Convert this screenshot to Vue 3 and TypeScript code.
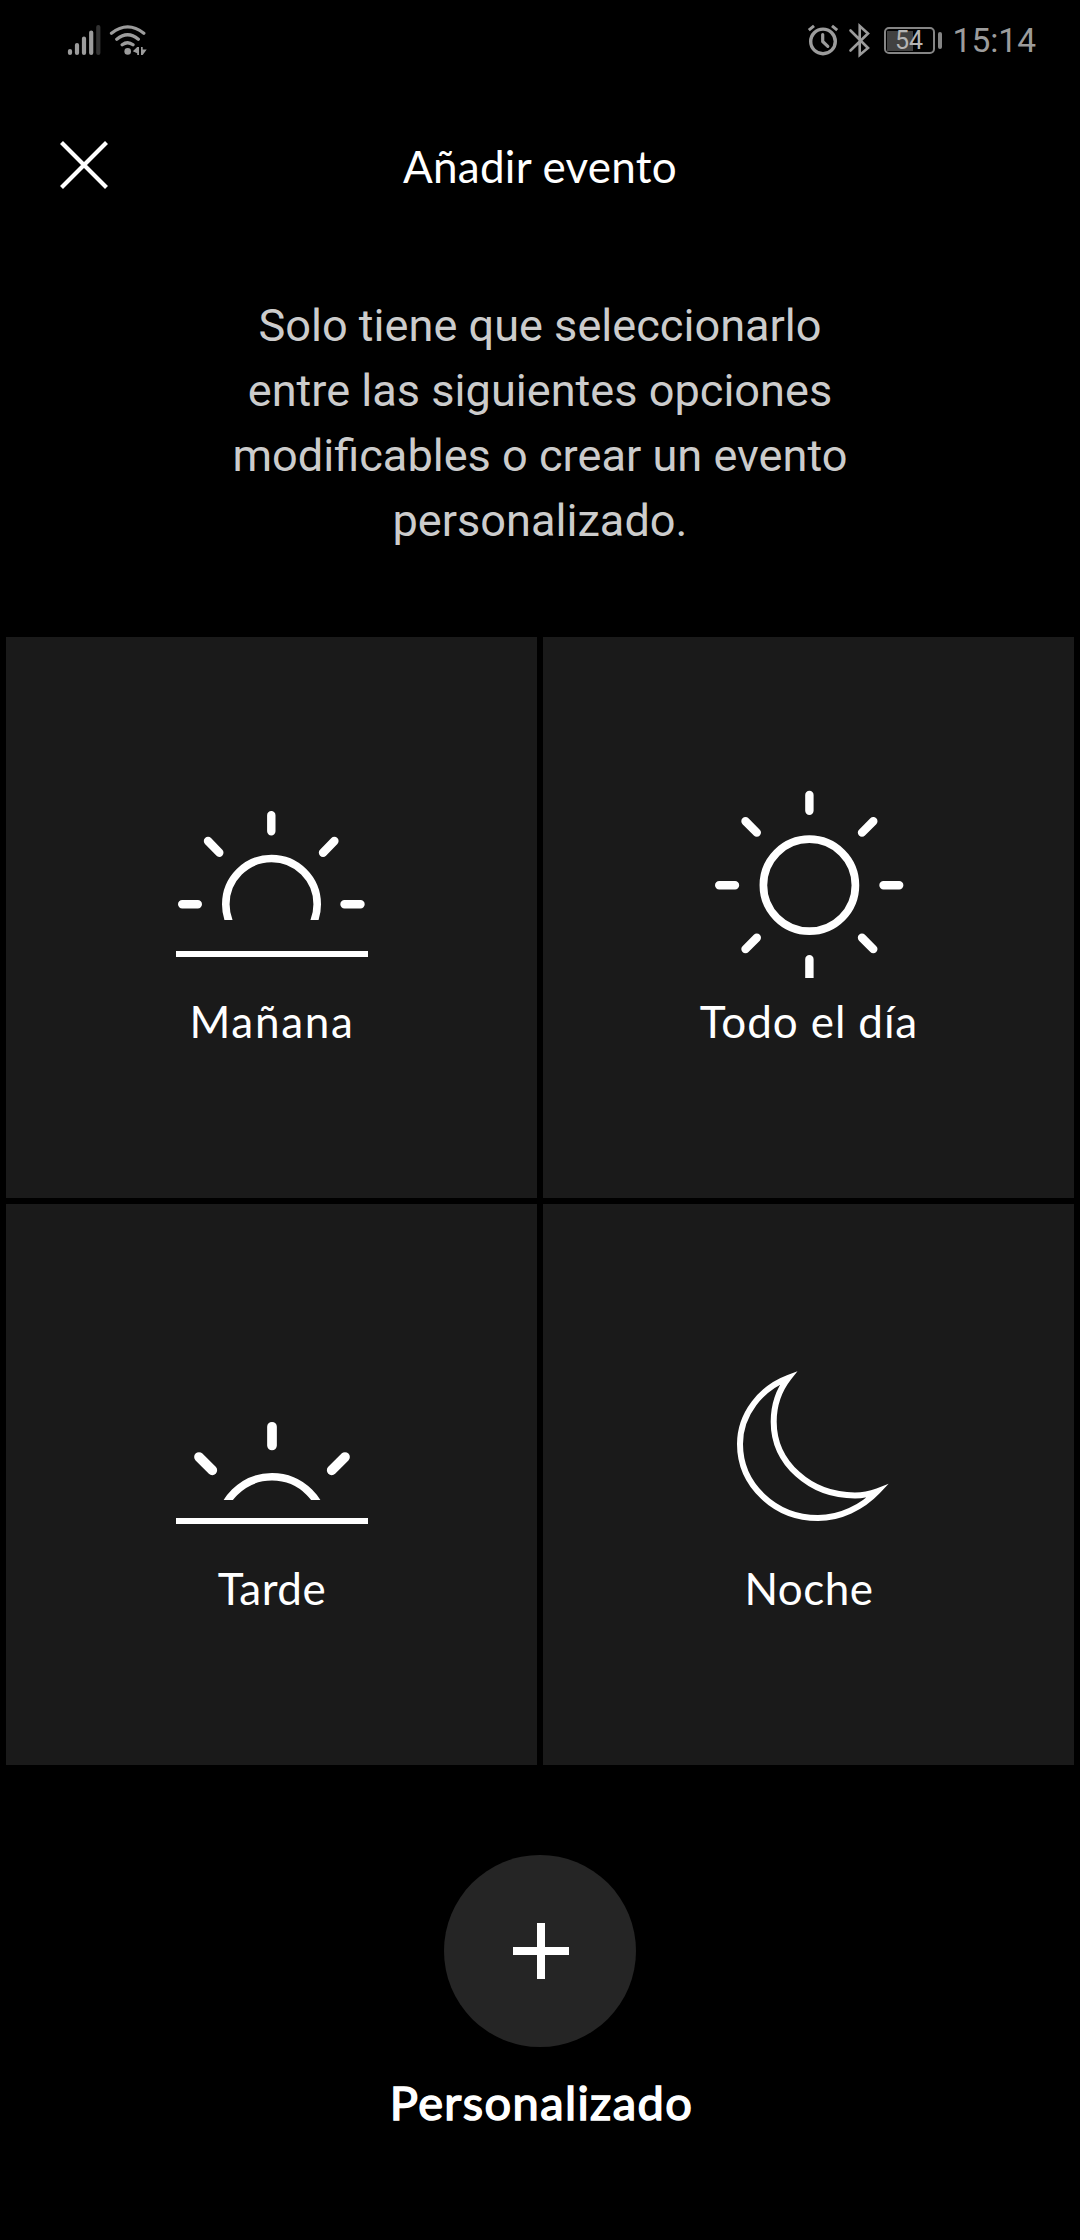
<script setup lang="ts">
interface EventOption {
  id: 'morning' | 'day' | 'evening' | 'night'
  label: string
}

const options: EventOption[] = [
  { id: 'morning', label: 'Mañana' },
  { id: 'day', label: 'Todo el día' },
  { id: 'evening', label: 'Tarde' },
  { id: 'night', label: 'Noche' },
]
const intro = [
  'Solo tiene que seleccionarlo',
  'entre las siguientes opciones',
  'modificables o crear un evento',
  'personalizado.',
]
</script>

<template>
  <main class="screen">
    <div class="status">
      <svg class="signal" viewBox="0 0 82 36" width="82" height="36">
        <g stroke="#9c9c9c" stroke-width="4.2" stroke-linecap="round" fill="none">
          <path d="M4 30.9V29M11 30.9V23M18 30.9V16.5M25.2 30.9V10.5" />
          <path d="M32.3 30.9V5" stroke="#323232" />
          <path d="M45.5 11.2Q61.7-1.5 77.800 11.2M50.8 17.2Q61.7 8.2 72.3 17.2M56.2 22.8Q61.7 18.6 67 22.8" stroke-width="3.3" />
        </g>
        <circle cx="61.7" cy="29.4" r="3.3" fill="#9c9c9c" />
        <path d="M73 25V33H71.200V31.200L66.800 29.300L71.200 25ZM75 25H76.700V27.500H80.700L76.700 33H75Z" fill="#9c9c9c" />
      </svg>
      <div class="status-right">
        <svg class="alarm" viewBox="0 0 32 36" width="32" height="36">
          <g fill="none" stroke="#9c9c9c">
            <circle cx="16" cy="19.4" r="12.3" stroke-width="3.4" />
            <path d="M15.7 12.5V19.5L20.8 24.3" stroke-width="3.2" stroke-linecap="round" stroke-linejoin="round" />
            <path d="M1.8 8.2L7 3.9M30.2 8.2L25 3.9" stroke-width="3" />
          </g>
        </svg>
        <svg class="bluetooth" viewBox="0 0 22 36" width="22" height="36">
          <path d="M2.5 8.5L20 26L11.7 33V4L20 11.5L2.5 28.5" fill="none" stroke="#9c9c9c" stroke-width="2.6" stroke-linecap="round" />
        </svg>
        <div class="battery"><span class="level"></span><span class="percent">54</span></div>
        <span class="battery-tip"></span>
        <span class="clock">15:14</span>
      </div>
    </div>

    <header class="header">
      <svg class="close" viewBox="0 0 48 48" width="48" height="48">
        <path d="M1.5 1.5L46.5 46.5M46.5 1.5L1.5 46.5" stroke="#fff" stroke-width="4.2" />
      </svg>
      <h1 class="title">Añadir evento</h1>
    </header>

    <p class="intro"><span v-for="line in intro" :key="line">{{ line }}</span></p>

    <section class="grid">
      <button v-for="option in options" :key="option.id" class="tile" type="button">
        <svg v-if="option.id === 'morning'" class="icon" viewBox="0 0 192 192" width="192" height="192">
          <clipPath id="sunrise-horizon"><rect width="192" height="134" /></clipPath>
          <g fill="none" stroke="#fff">
            <circle cx="95.5" cy="118.2" r="45.7" stroke-width="7.6" clip-path="url(#sunrise-horizon)" />
            <path d="M95.3 29.2V45.2M6.2 118.3H21.8M168.5 118.3H184.5M32 55L43.3 66.7M158.4 55L147 66.7" stroke-width="8.4" stroke-linecap="round" />
            <path d="M0 168H192" stroke-width="6" />
          </g>
        </svg>
        <svg v-else-if="option.id === 'day'" class="icon" viewBox="0 0 192 192" width="192" height="192">
          <g fill="none" stroke="#fff">
            <circle cx="96.4" cy="99.2" r="46" stroke-width="7.7" />
            <path d="M96.4 9V24.7M6.2 99.2H22M170.5 99.2H186.2M32.5 35.3L43.8 46.6M160.3 35.3L149 46.6M32.5 163.1L43.8 151.8M160.3 163.1L149 151.8M96.4 173.3V196" stroke-width="8.4" stroke-linecap="round" />
          </g>
        </svg>
        <svg v-else-if="option.id === 'evening'" class="icon" viewBox="0 0 192 192" width="192" height="192">
          <clipPath id="sunset-horizon"><rect width="192" height="147" /></clipPath>
          <g fill="none" stroke="#fff">
            <circle cx="96" cy="176.6" r="52.8" stroke-width="7.6" clip-path="url(#sunset-horizon)" />
            <path d="M96 73.8V92.500M23 104L36.300 117.300M169 104L155.700 117.300" stroke-width="9.7" stroke-linecap="round" />
            <path d="M0 168H192" stroke-width="6" />
          </g>
        </svg>
        <svg v-else class="icon" viewBox="0 0 192 192" width="192" height="192">
          <path d="M75.6 24.7C48 35 27 61 27 91C27 132 62 165 105 165C127 165 149 154.500 164.500 138.200C157 141 149.500 142.500 142 142.500C97 142.500 60.700 110 60.700 68.700C60.700 52 66 37 75.600 24.700Z" fill="none" stroke="#fff" stroke-width="6" stroke-miterlimit="10" />
        </svg>
        <span class="label" :class="option.id">{{ option.label }}</span>
      </button>
    </section>

    <section class="custom">
      <button class="add" type="button">
        <svg viewBox="0 0 56 56" width="56" height="56">
          <path d="M28 0V56M0 28H56" stroke="#fff" stroke-width="8" />
        </svg>
      </button>
      <span class="custom-label">Personalizado</span>
    </section>
  </main>
</template>

<style>
body {
  margin: 0;
  background: #000;
}
</style>

<style scoped>
.screen {
  box-sizing: border-box;
  width: 1080px;
  height: 2240px;
  overflow: hidden;
  background: #000;
  color: #fff;
  font-family: Lato, "Open Sans", sans-serif;
}
.screen * {
  box-sizing: border-box;
}
button {
  margin: 0;
  padding: 0;
  border: 0;
  color: inherit;
  font: inherit;
}
svg {
  display: block;
  flex: none;
}
.status {
  display: flex;
  justify-content: space-between;
  height: 80px;
  padding: 22px 44px 0 66px;
}
.status-right {
  display: flex;
  height: 36px;
  color: #9c9c9c;
  font-family: Roboto, sans-serif;
}
.bluetooth {
  margin-left: 9px;
}
.battery {
  position: relative;
  width: 51px;
  height: 27px;
  margin: 5px 0 0 14px;
  border: 2px solid #858585;
  border-radius: 5px;
}
.level {
  display: block;
  width: 26px;
  height: 20px;
  margin: 1.5px;
  background: #414141;
}
.percent {
  position: absolute;
  inset: 0;
  color: #b4b4b4;
  font-size: 25px;
  line-height: 24px;
  text-align: center;
}
.battery-tip {
  width: 4px;
  height: 17px;
  margin: 10px 0 0 3px;
  border-radius: 2px;
  background: #858585;
}
.clock {
  margin-left: 11px;
  font-size: 33.5px;
  line-height: 38px;
}
.header {
  display: grid;
  grid-template-columns: 108px 1fr 108px;
  height: 180px;
  padding-top: 61px;
}
.close {
  justify-self: end;
}
.title {
  margin: 0;
  font-size: 44px;
  font-weight: 400;
  line-height: 51px;
  letter-spacing: 0.25px;
  text-align: center;
}
.intro {
  display: flex;
  flex-direction: column;
  height: 377px;
  margin: 0;
  padding-top: 33px;
  color: #ccc;
  font-family: Roboto, sans-serif;
  font-size: 45.12px;
  line-height: 65px;
  text-align: center;
}
.grid {
  display: grid;
  grid-template-columns: 531px 531px;
  grid-template-rows: 561px 561px;
  gap: 6px;
  padding: 0 6px;
}
.tile {
  display: flex;
  flex-direction: column;
  align-items: center;
  padding: 149px 0 0 1px;
  background: #1a1a1a;
}
.label {
  margin-top: 15px;
  font-size: 44px;
  line-height: 56px;
  letter-spacing: 0.5px;
}
.label.morning {
  letter-spacing: 1.7px;
}
.label.day {
  letter-spacing: 0.9px;
}
.custom {
  display: flex;
  flex-direction: column;
  align-items: center;
  padding-top: 90px;
}
.add {
  display: grid;
  place-items: center;
  width: 192px;
  height: 192px;
  padding-left: 2px;
  border-radius: 50%;
  background: #252525;
}
.custom-label {
  margin: 27px 0 0 3px;
  font-size: 47px;
  line-height: 56px;
  letter-spacing: 1.4px;
  -webkit-text-stroke: 1.5px #fff;
}
</style>
